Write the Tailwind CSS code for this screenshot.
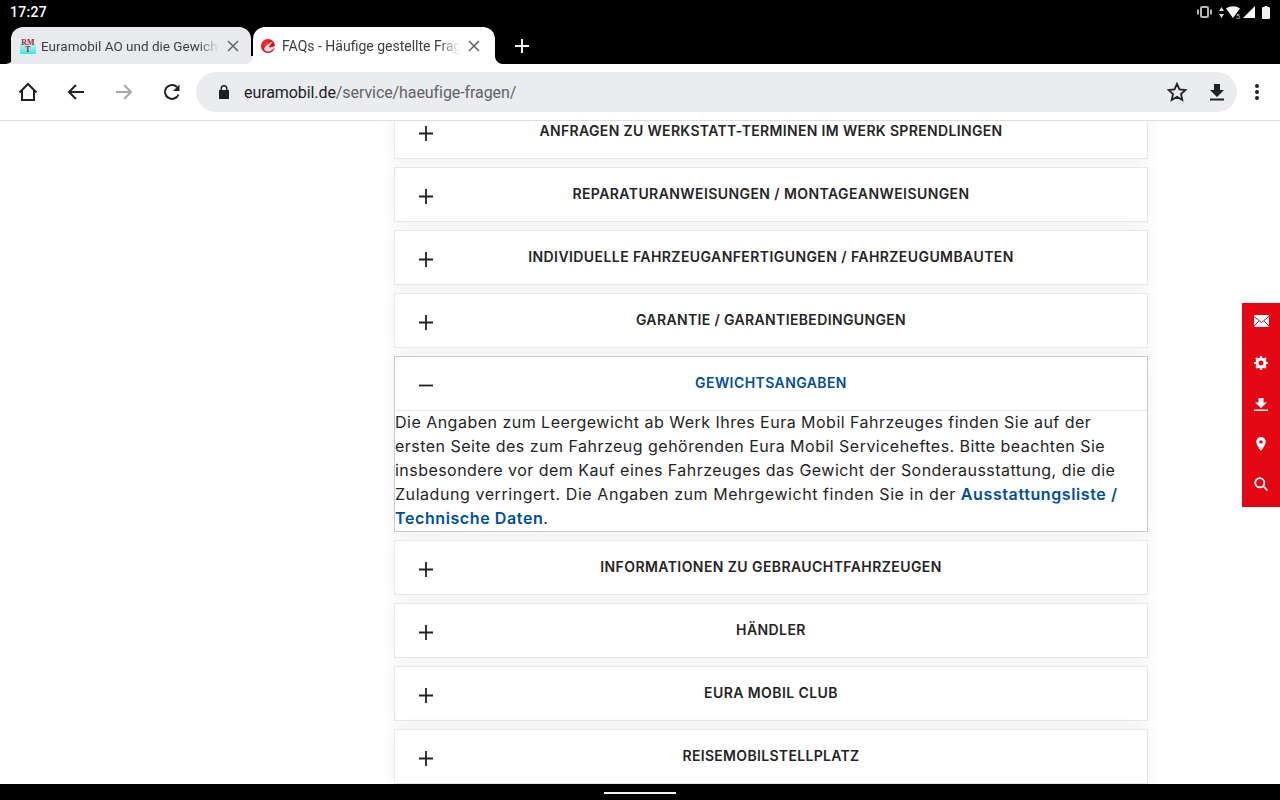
<!DOCTYPE html>
<html lang="de">
<head>
<meta charset="utf-8">
<title>FAQs</title>
<script src="https://cdn.jsdelivr.net/npm/@tailwindcss/browser@4"></script>
</head>
<body class="w-[1280px] h-[800px] overflow-hidden bg-white font-['Roboto',sans-serif]">
<div class="relative flex flex-col h-[800px]">
	<!-- status bar + tabs -->
	<div class="bg-black h-[64px] shrink-0">
		<div class="h-[27px] flex items-center justify-between pl-[10px] pr-[10px] text-white">
			<div class="text-[14px] font-medium tracking-[0.3px] leading-none -mt-[3px]">17:27</div>
			<div class="flex items-center -mt-[3px]">
				<svg width="15" height="12" viewBox="0 0 15 12" fill="none" stroke="#b4b4b4"><rect x="4" y="1" width="7" height="10" rx="1" stroke-width="2"/><path d="M1 3.500v5M14 3.500v5" stroke-width="2"/></svg>
				<svg class="ml-[7px]" width="5" height="13" viewBox="0 0 5 13" fill="#ddd"><path d="M2.500 1L5 5H0zM2.500 12L5 8H0z"/></svg>
				<svg class="ml-[2px]" width="16" height="13" viewBox="0 0 16 13" fill="#f4f4f4"><path d="M0 2.500C4-.5 10-.5 14 2.500L7 12z"/><text x="10" y="12.500" font-size="7" fill="#ccc" font-family="Roboto">5</text></svg>
				<svg class="ml-[1px]" width="12" height="12" viewBox="0 0 12 12" fill="#fff"><path d="M12 0v12H0z"/></svg>
				<svg class="ml-[7px]" width="8" height="13" viewBox="0 0 8 13" fill="#f2f2f2"><path d="M2.500 0h3v1H7a1 1 0 0 1 1 1v10a1 1 0 0 1-1 1H1a1 1 0 0 1-1-1V2a1 1 0 0 1 1-1h1.500z"/></svg>
			</div>
		</div>
		<div class="h-[37px] flex items-end pl-[11px] gap-[2px]">
			<div class="relative w-[240px] h-[37px] bg-[#e8eaed] rounded-t-[12px] flex items-center pl-[9px] pr-[12px] text-[#3c4043]">
				<span class="absolute -left-[4px] bottom-0 w-[4px] h-[6px] bg-[radial-gradient(circle_at_0_0,#000_5px,#e8eaed_6px)]"></span>
				<div class="w-[16px] h-[16px] shrink-0 bg-gradient-to-b from-[#f0f0f0] via-[#a0f0e8] to-[#30e8e0] text-[8px] leading-[7px] pt-[1px] font-['Liberation_Serif',serif] text-[#c01030] font-bold text-center">RM<br>T</div>
				<div class="ml-[5px] w-[178px] overflow-hidden whitespace-nowrap text-[13.5px] leading-[20px] mt-[1px] [mask-image:linear-gradient(to_right,black_88%,transparent)]">Euramobil AO und die Gewichtsangaben</div>
				<svg class="ml-auto" width="12" height="12" viewBox="0 0 12 12" stroke="#5f6368" stroke-width="1.500"><path d="M1 1l10 10M11 1L1 11"/></svg>
			</div>
			<div class="relative w-[242px] h-[37px] bg-white rounded-t-[12px] flex items-center pl-[7px] pr-[15px] text-[#3c4043]">
				<span class="absolute -left-[8px] bottom-0 w-[8px] h-[8px] bg-[radial-gradient(circle_at_0_0,#e8eaed_7.500px,#fff_8.500px)]"></span>
				<span class="absolute -right-[8px] bottom-0 w-[8px] h-[8px] bg-[radial-gradient(circle_at_100%_0,#000_7.500px,#fff_8.500px)]"></span>
				<svg class="shrink-0" width="16" height="16" viewBox="0 0 16 16"><defs><radialGradient id="swirl" cx="35%" cy="35%" r="70%"><stop offset="0" stop-color="#ff3030"/><stop offset="1" stop-color="#c00818"/></radialGradient></defs><circle cx="8" cy="8" r="7" fill="url(#swirl)"/><path d="M4 10.500C6 7 9 5 13.500 3.500 11 5.500 9.500 7.500 8.500 9.500c2.500 0 5-.7 7.500-2.500-1 3.500-5 7-8.500 6.500C5.500 13.300 4.300 12 4 10.500z" fill="#fff" fill-opacity="0.85"/></svg>
				<div class="ml-[6px] w-[178px] overflow-hidden whitespace-nowrap text-[14px] leading-[20px] mt-[1px] [mask-image:linear-gradient(to_right,black_88%,transparent)]">FAQs - Häufige gestellte Fragen</div>
				<svg class="ml-auto" width="12" height="12" viewBox="0 0 12 12" stroke="#5f6368" stroke-width="1.500"><path d="M1 1l10 10M11 1L1 11"/></svg>
			</div>
			<svg class="ml-[18px] mb-[11px]" width="14" height="14" viewBox="0 0 14 14" stroke="#f1f3f4" stroke-width="2"><path d="M7 0v14M0 7h14"/></svg>
		</div>
	</div>
	<!-- toolbar -->
	<div class="h-[57px] shrink-0 flex items-center border-b border-[#dedede] pb-[1px]">
		<div class="w-[196px] shrink-0 flex items-center relative h-full">
			<div class="flex items-center pl-[18px] gap-[28px]">
				<svg width="20" height="20" viewBox="0 0 20 20" fill="none" stroke="#202124" stroke-width="2"><path d="M1.500 10.500L10 2l8.500 8.500M4 8.500V18h12V8.500"/></svg>
				<svg width="20" height="20" viewBox="0 0 20 20" fill="none" stroke="#202124" stroke-width="2"><path d="M18 10H3M10 3l-7 7 7 7"/></svg>
				<svg width="20" height="20" viewBox="0 0 20 20" fill="none" stroke="#a8a8a8" stroke-width="2"><path d="M2 10h15M10 3l7 7-7 7"/></svg>
				<svg width="20" height="20" viewBox="0 0 20 20" fill="none" stroke="#202124" stroke-width="2"><path d="M16.500 12.500A7 7 0 1 1 15 5"/><path d="M17.500 2.500v6.500h-6.500z" fill="#202124" stroke="none"/></svg>
			</div>
		</div>
		<div class="w-[1041px] h-[40px] rounded-full bg-[#ebecf0] flex items-center pl-[22px] pr-[13px]">
			<svg width="12" height="14" viewBox="0 0 12 14" fill="#202124"><path d="M2.500 5V3.500a3.500 3.500 0 0 1 7 0V5H11v9H1V5zM4 5h4V3.500a2 2 0 0 0-4 0z"/></svg>
			<div class="ml-[14px] mt-[2px] text-[16px] text-[#5f6368] tracking-[-0.08px]"><span class="text-[#202124]">euramobil.de</span>/service/haeufige-fragen/</div>
			<svg class="ml-auto" width="20" height="20" viewBox="0 0 20 20" fill="none" stroke="#202124" stroke-width="1.800"><path d="M10 1.800l2.500 5.600 6 .6-4.500 4 1.300 6-5.300-3.100-5.300 3.100 1.300-6-4.500-4 6-.6z"/></svg>
			<svg class="ml-[23px]" width="14" height="18" viewBox="0 0 14 18" fill="#202124"><path d="M4 1h6v6h4l-7 7-7-7h4zM0 15.500h14V17.500H0z"/></svg>
		</div>
		<div class="flex-1 flex justify-center pr-[4px]">
			<svg width="4" height="16" viewBox="0 0 4 16" fill="#202124"><circle cx="2" cy="2" r="2"/><circle cx="2" cy="8" r="2"/><circle cx="2" cy="14" r="2"/></svg>
		</div>
	</div>
	<!-- page -->
	<div class="flex-1 overflow-hidden relative font-['Inter',sans-serif]">
		<div class="w-[754px] ml-[394px] -mt-[17px] flex flex-col gap-[8px]">
			<div class="h-[55px] bg-white border border-[#e8e8e8] shadow-[0_0_18px_rgba(0,0,0,0.06)] flex items-center relative">
				<svg class="absolute left-[24px] top-[21px]" width="14" height="15" viewBox="0 0 14 15" stroke="#222" stroke-width="1.800"><path d="M7 0v15M0 7.500h14"/></svg>
				<div class="w-full text-center -mt-[2px] text-[14px] font-semibold text-[#252525] tracking-[0.34px]">ANFRAGEN ZU WERKSTATT-TERMINEN IM WERK SPRENDLINGEN</div>
			</div>
			<div class="h-[55px] bg-white border border-[#e8e8e8] shadow-[0_0_18px_rgba(0,0,0,0.06)] flex items-center relative">
				<svg class="absolute left-[24px] top-[21px]" width="14" height="15" viewBox="0 0 14 15" stroke="#222" stroke-width="1.800"><path d="M7 0v15M0 7.500h14"/></svg>
				<div class="w-full text-center -mt-[2px] text-[14px] font-semibold text-[#252525] tracking-[0.42px]">REPARATURANWEISUNGEN / MONTAGEANWEISUNGEN</div>
			</div>
			<div class="h-[55px] bg-white border border-[#e8e8e8] shadow-[0_0_18px_rgba(0,0,0,0.06)] flex items-center relative">
				<svg class="absolute left-[24px] top-[21px]" width="14" height="15" viewBox="0 0 14 15" stroke="#222" stroke-width="1.800"><path d="M7 0v15M0 7.500h14"/></svg>
				<div class="w-full text-center -mt-[2px] text-[14px] font-semibold text-[#252525] tracking-[0.42px]">INDIVIDUELLE FAHRZEUGANFERTIGUNGEN / FAHRZEUGUMBAUTEN</div>
			</div>
			<div class="h-[55px] bg-white border border-[#e8e8e8] shadow-[0_0_18px_rgba(0,0,0,0.06)] flex items-center relative">
				<svg class="absolute left-[24px] top-[21px]" width="14" height="15" viewBox="0 0 14 15" stroke="#222" stroke-width="1.800"><path d="M7 0v15M0 7.500h14"/></svg>
				<div class="w-full text-center -mt-[2px] text-[14px] font-semibold text-[#252525] tracking-[0.36px]">GARANTIE / GARANTIEBEDINGUNGEN</div>
			</div>
			<!-- open item -->
			<div class="h-[176px] bg-white border border-[#c8ccd4] shadow-[0_0_18px_rgba(0,0,0,0.06)]">
				<div class="h-[54px] border-b border-[#e8e8e8] flex items-center relative">
					<svg class="absolute left-[24px] top-[21px]" width="14" height="15" viewBox="0 0 14 15" stroke="#222" stroke-width="1.800"><path d="M0 7.500h14"/></svg>
					<div class="w-full text-center -mt-[2px] text-[14px] font-semibold text-[#004f9f] tracking-[0.42px]">GEWICHTSANGABEN</div>
				</div>
				<div class="-mt-[1px] text-[16px] leading-[24px] text-[#252525] tracking-[0.48px] whitespace-nowrap">
					Die Angaben zum Leergewicht ab Werk Ihres Eura Mobil Fahrzeuges finden Sie auf der<br>
					ersten Seite des zum Fahrzeug gehörenden Eura Mobil Serviceheftes. Bitte beachten Sie<br>
					<span class="tracking-[0.46px]">insbesondere vor dem Kauf eines Fahrzeuges das Gewicht der Sonderausstattung, die die</span><br>
					<span class="tracking-[0.56px]">Zuladung verringert. Die Angaben zum Mehrgewicht finden Sie in der</span> <span class="font-semibold text-[#004f9f] tracking-[0.6px]">Ausstattungsliste /<br>Technische Daten</span>.
				</div>
			</div>
			<div class="h-[55px] bg-white border border-[#e8e8e8] shadow-[0_0_18px_rgba(0,0,0,0.06)] flex items-center relative">
				<svg class="absolute left-[24px] top-[21px]" width="14" height="15" viewBox="0 0 14 15" stroke="#222" stroke-width="1.800"><path d="M7 0v15M0 7.500h14"/></svg>
				<div class="w-full text-center -mt-[2px] text-[14px] font-semibold text-[#252525] tracking-[0.42px]">INFORMATIONEN ZU GEBRAUCHTFAHRZEUGEN</div>
			</div>
			<div class="h-[55px] bg-white border border-[#e8e8e8] shadow-[0_0_18px_rgba(0,0,0,0.06)] flex items-center relative">
				<svg class="absolute left-[24px] top-[21px]" width="14" height="15" viewBox="0 0 14 15" stroke="#222" stroke-width="1.800"><path d="M7 0v15M0 7.500h14"/></svg>
				<div class="w-full text-center -mt-[2px] text-[14px] font-semibold text-[#252525] tracking-[0.42px]">HÄNDLER</div>
			</div>
			<div class="h-[55px] bg-white border border-[#e8e8e8] shadow-[0_0_18px_rgba(0,0,0,0.06)] flex items-center relative">
				<svg class="absolute left-[24px] top-[21px]" width="14" height="15" viewBox="0 0 14 15" stroke="#222" stroke-width="1.800"><path d="M7 0v15M0 7.500h14"/></svg>
				<div class="w-full text-center -mt-[2px] text-[14px] font-semibold text-[#252525] tracking-[0.42px]">EURA MOBIL CLUB</div>
			</div>
			<div class="h-[55px] bg-white border border-[#e8e8e8] shadow-[0_0_18px_rgba(0,0,0,0.06)] flex items-center relative">
				<svg class="absolute left-[24px] top-[21px]" width="14" height="15" viewBox="0 0 14 15" stroke="#222" stroke-width="1.800"><path d="M7 0v15M0 7.500h14"/></svg>
				<div class="w-full text-center -mt-[2px] text-[14px] font-semibold text-[#252525] tracking-[0.32px]">REISEMOBILSTELLPLATZ</div>
			</div>
		</div>
		<!-- red side bar -->
		<div class="absolute right-0 top-[182px] w-[38px] h-[204px] bg-[#e30613] flex flex-col items-center pt-[12px]">
			<svg width="15" height="12" viewBox="0 0 15 12"><rect width="15" height="12" rx="1" fill="#fff"/><path d="M0 1.500l7.500 6 7.500-6M0 11l5-5M15 11l-5-5" fill="none" stroke="#e30613"/></svg>
			<svg class="mt-[29px]" width="14" height="14" viewBox="0 0 14 14"><circle cx="7" cy="7" r="4" fill="none" stroke="#fff" stroke-width="3"/><path d="M7 0v14M0 7h14M2 2l10 10M12 2L2 12" stroke="#fff" stroke-width="2.200" stroke-dasharray="2.500 9 2.500 9"/></svg>
			<svg class="mt-[28px]" width="14" height="13" viewBox="0 0 14 13" fill="#fff"><path d="M4.500 0h5v4.500H13L7 10 1 4.500h3.500zM0 11.500h14V13H0z"/></svg>
			<svg class="mt-[26px]" width="10" height="14" viewBox="0 0 10 14"><path fill-rule="evenodd" fill="#fff" d="M5 0a4.800 4.800 0 0 1 4.800 4.800C9.800 8 5 14 5 14S.2 8 .2 4.800A4.800 4.800 0 0 1 5 0zm0 3.200a1.700 1.700 0 1 0 0 3.400 1.700 1.700 0 0 0 0-3.400z"/></svg>
			<svg class="mt-[26px]" width="14" height="14" viewBox="0 0 14 14" fill="none" stroke="#fff" stroke-width="1.800"><circle cx="5.800" cy="5.800" r="4.600"/><path d="M9.200 9.200L13.500 13.500"/></svg>
		</div>
	</div>
	<!-- nav bar -->
	<div class="h-[16px] shrink-0 bg-black flex justify-center">
		<div class="w-[72px] h-[2px] mt-[8px] bg-[#f0f0f0]"></div>
	</div>
</div>
</body>
</html>
